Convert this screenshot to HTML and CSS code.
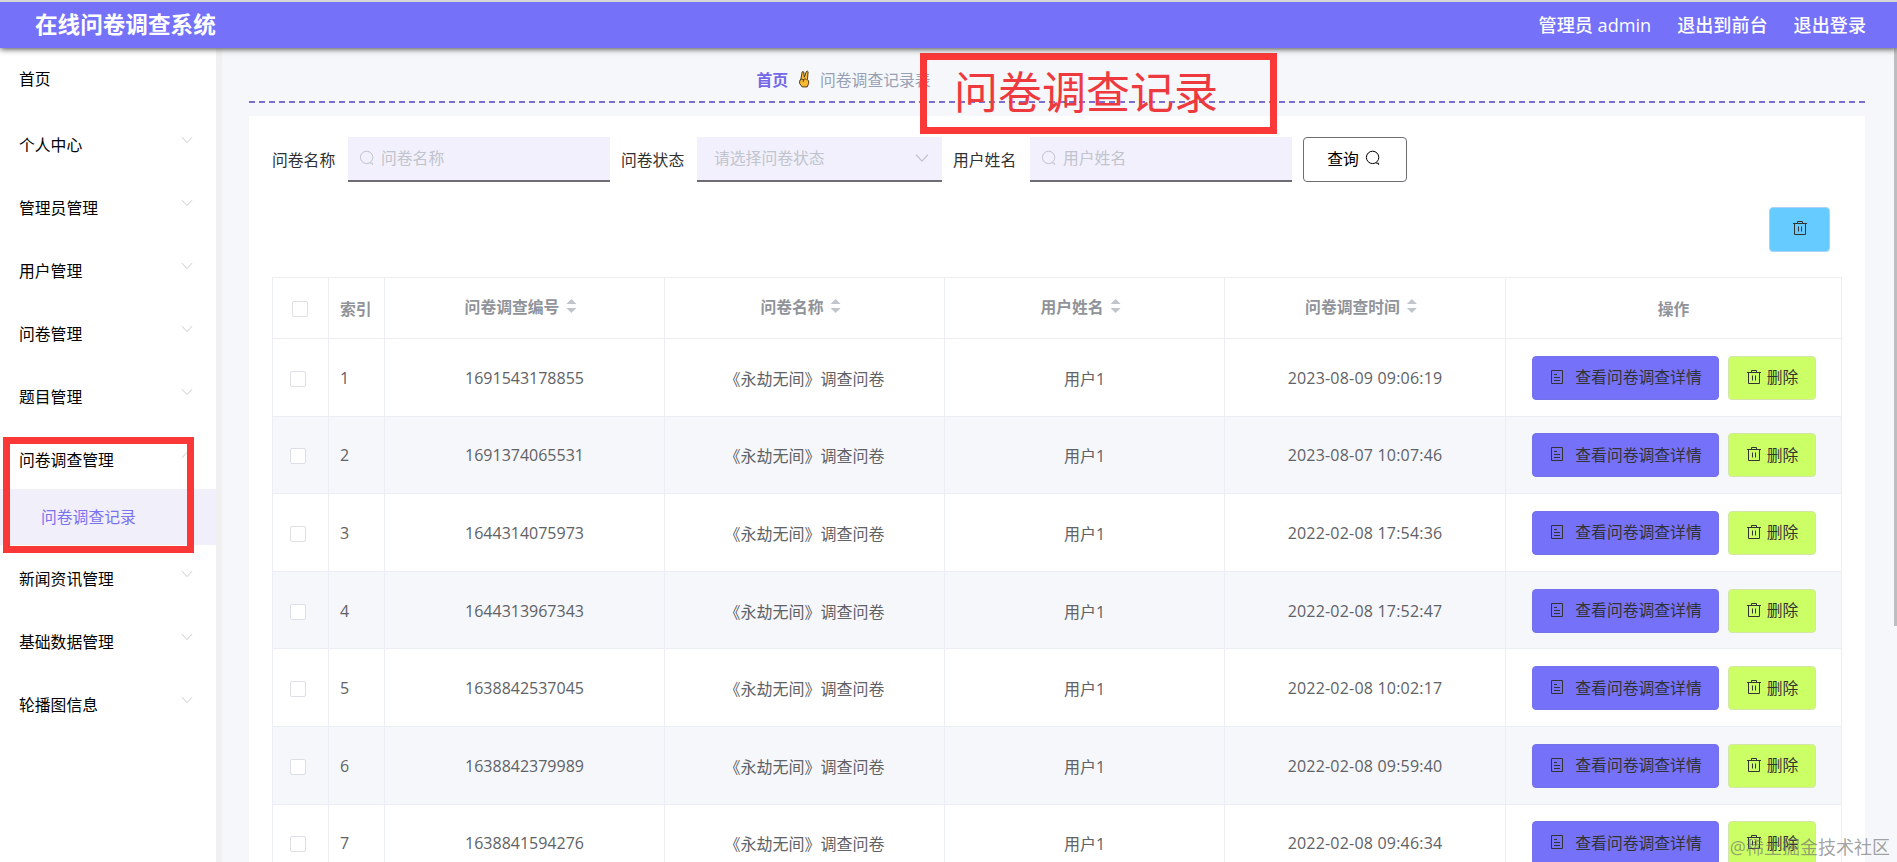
FILE: index.html
```html
<!DOCTYPE html>
<html lang="zh-CN">
<head>
  <meta charset="UTF-8" />
  <meta name="viewport" content="width=device-width, initial-scale=1.0"/>
  <title>在线问卷调查系统</title>
  <link rel="stylesheet" href="styles.css">
</head>
<body>

  <svg class="sprite" xmlns="http://www.w3.org/2000/svg">
    <symbol id="search" viewBox="0 0 16 16">
      <circle cx="7.6" cy="7.4" r="6.2"/>
      <path d="M11.2 13.2H13.6V14.8"/>
    </symbol>
    <symbol id="down" viewBox="0 0 12 12">
      <path d="M1 3.2L6 8.6L11 3.2"/>
    </symbol>
    <symbol id="trash" viewBox="0 0 16 16">
      <path d="M1 3.5H15M5.5 3V1.5H10.5V3M2.5 3.5V14.5H13.5V3.5M6.5 6.5V11.5M9.5 6.5V11.5"/>
    </symbol>
    <symbol id="doc" viewBox="0 0 16 16">
      <path d="M2.5 1.5H13.5V14.5H2.5ZM5 5.5H8M5 8.5H11M5 11.5H11"/>
    </symbol>
  </svg>

  <header class="navbar">
    <h1>在线问卷调查系统</h1>
    <nav>
      <span>管理员 admin</span>
      <span>退出到前台</span>
      <span>退出登录</span>
    </nav>
  </header>

  <div class="container">
    <aside class="sidebar">
      <ul class="menu">
        <li class="home">首页</li>
        <li>个人中心<svg><use href="#down"/></svg></li>
        <li>管理员管理<svg><use href="#down"/></svg></li>
        <li>用户管理<svg><use href="#down"/></svg></li>
        <li>问卷管理<svg><use href="#down"/></svg></li>
        <li>题目管理<svg><use href="#down"/></svg></li>
        <li class="open">问卷调查管理<svg><use href="#down"/></svg></li>
        <li class="sub">问卷调查记录</li>
        <li>新闻资讯管理<svg><use href="#down"/></svg></li>
        <li>基础数据管理<svg><use href="#down"/></svg></li>
        <li>轮播图信息<svg><use href="#down"/></svg></li>
      </ul>
      <div class="mark mark-menu"></div>
    </aside>

    <main class="content">
      <div class="breadcrumb">
        <b>首页</b>
        <svg class="hand" viewBox="0 0 14 20">
          <path d="M3 10L4.4 2.2Q5.3.6 6.2 2.3L6.8 8L9 1.8Q10.2.4 11 2L10.3 10.4Q12.2 12 11.6 15L10 18.8H4.4L1.6 15Q1 11.5 3 10Z"/>
          <path d="M2 11.5Q4 9 6 10.8L5.5 13.2M6 10.5Q8 9 9.4 11"/>
        </svg>
        <span>问卷调查记录表</span>
      </div>

      <div class="card">
        <form class="search">
          <label>问卷名称</label>
          <div class="field"><svg><use href="#search"/></svg>问卷名称</div>
          <label>问卷状态</label>
          <div class="field select">请选择问卷状态<svg><use href="#down"/></svg></div>
          <label class="name">用户姓名</label>
          <div class="field"><svg><use href="#search"/></svg>用户姓名</div>
          <button type="button" class="btn-search">查询<svg><use href="#search"/></svg></button>
        </form>

        <div class="tools">
          <button class="btn-batch"><svg><use href="#trash"/></svg></button>
        </div>

        <table>
          <colgroup>
            <col class="w-check"><col class="w-check"><col class="w-data"><col class="w-data"><col class="w-data"><col class="w-time"><col>
          </colgroup>
          <thead>
            <tr>
              <th class="check"><i class="box"></i></th>
              <th class="index">索引</th>
              <th><div class="sort">问卷调查编号<i></i></div></th>
              <th><div class="sort">问卷名称<i></i></div></th>
              <th><div class="sort">用户姓名<i></i></div></th>
              <th><div class="sort">问卷调查时间<i></i></div></th>
              <th>操作</th>
            </tr>
          </thead>
          <tbody id="rows"></tbody>
        </table>
      </div>

      <div class="mark mark-title">问卷调查记录</div>
    </main>
  </div>

  <div class="scrollbar"></div>
  <div class="watermark">@稀土掘金技术社区</div>

  <script>
    const records = [
      ["1691543178855", "2023-08-09 09:06:19"],
      ["1691374065531", "2023-08-07 10:07:46"],
      ["1644314075973", "2022-02-08 17:54:36"],
      ["1644313967343", "2022-02-08 17:52:47"],
      ["1638842537045", "2022-02-08 10:02:17"],
      ["1638842379989", "2022-02-08 09:59:40"],
      ["1638841594276", "2022-02-08 09:46:34"]
    ];

    document.getElementById("rows").innerHTML = records.map((r, i) => `
      <tr>
        <td class="check"><i class="box"></i></td>
        <td class="index">${i + 1}</td>
        <td>${r[0]}</td>
        <td>《永劫无间》调查问卷</td>
        <td>用户1</td>
        <td class="time">${r[1]}</td>
        <td><div class="actions">
          <button class="btn-detail"><svg><use href="#doc"/></svg>查看问卷调查详情</button>
          <button class="btn-delete"><svg><use href="#trash"/></svg>删除</button>
        </div></td>
      </tr>`).join("");
  </script>

</body>
</html>
```
FILE: styles.css
```css
* {
  box-sizing: border-box;
}

body {
  margin: 0;
  height: 862px;
  overflow: hidden;
  font-family: "Open Sans", "Noto Sans CJK SC", sans-serif;
  font-size: 15.8px;
  color: #303133;
  background-color: #f5f7fa;
}

.sprite {
  display: none;
}

svg {
  fill: none;
  stroke: currentColor;
}

button {
  font-family: inherit;
  font-size: 15.8px;
  color: #333;
  border-radius: 4px;
  display: flex;
  align-items: center;
  justify-content: center;
}

.navbar {
  position: relative;
  z-index: 2;
  display: flex;
  justify-content: space-between;
  align-items: center;
  height: 48px;
  padding: 0 31px 0 35px;
  border-top: 2px solid #d6d6d6;
  background-color: #7571f9;
  box-shadow: 0 1px 6px #444;
  color: #fff;
}

.navbar h1 {
  margin: 0;
  font-size: 22.6px;
  line-height: 46px;
}

.navbar nav {
  display: flex;
  gap: 26px;
  padding-bottom: 3px;
  font-size: 18.1px;
  font-weight: 500;
}

.container {
  display: flex;
  height: 814px;
}

.sidebar {
  position: relative;
  flex: none;
  width: 222px;
  border-right: 6px solid #f0f0f0;
  background-color: #fff;
}

.menu {
  margin: 0;
  padding: 3px 0 0;
  list-style: none;
  color: #000;
}

.menu li {
  display: flex;
  justify-content: space-between;
  height: 56px;
  margin-bottom: 7px;
  padding: 0 23px 0 19px;
  line-height: 56px;
}

.menu .home {
  margin-bottom: 10px;
}

.menu svg {
  width: 12px;
  height: 12px;
  margin-top: 17px;
  color: #ccc;
}

.menu .open {
  margin-bottom: 1px;
}

.menu .open svg {
  transform: rotate(180deg);
}

.menu .sub {
  margin-bottom: 6px;
  padding-left: 41px;
  background-color: #f1effa;
  color: #7b72f0;
}

.mark {
  position: absolute;
  border: 7px solid #fb3838;
}

.mark-menu {
  left: 3px;
  top: 389px;
  width: 191px;
  height: 116px;
}

.mark-title {
  left: 698px;
  top: 5px;
  width: 357px;
  height: 81px;
  padding-left: 27px;
  font-size: 44px;
  line-height: 64px;
  color: #ee3a3e;
}

.content {
  position: relative;
  flex: 1;
  padding: 0 32px 0 27px;
}

.breadcrumb {
  display: flex;
  justify-content: center;
  align-items: center;
  height: 55px;
  margin-bottom: 13px;
  padding: 7px 427px 0 0;
  background: repeating-linear-gradient(90deg, #7a6ed0 0 6px, transparent 6px 10px) 0 100% / 100% 2px no-repeat;
  color: #97a0b4;
}

.breadcrumb b {
  color: #7468e8;
}

.hand {
  width: 13px;
  height: 18px;
  margin: 0 9px 0 10px;
  fill: #fcba30;
  stroke: #3b2a12;
}

.card {
  height: 746px;
  padding: 21px 23px 0;
  background-color: #fff;
}

.search {
  display: flex;
  height: 45px;
}

.search label {
  line-height: 46px;
  width: 76px;
}

.search .name {
  width: 77px;
}

.field {
  display: flex;
  align-items: center;
  width: 262px;
  margin-right: 11px;
  padding: 0 11px 2px;
  border-bottom: 2px solid #706c74;
  background-color: #f2f0fc;
  color: #c0c4cc;
}

.field svg {
  width: 16px;
  height: 16px;
  margin-right: 6px;
}

.select {
  justify-content: space-between;
  width: 245px;
  padding-left: 17px;
}

.select svg {
  width: 14px;
  height: 14px;
  margin-right: 2px;
}

.btn-search {
  width: 104px;
  padding: 0 2px 3px 0;
  border: 1px solid #706c74;
  background-color: #fff;
  color: #000;
}

.btn-search svg {
  width: 16px;
  height: 16px;
  margin-left: 6px;
}

.tools {
  display: flex;
  justify-content: flex-end;
  padding: 25px 12px 25px 0;
}

.btn-batch {
  width: 61px;
  height: 45px;
  padding: 0 0 3px;
  border: 1px solid #a9d2f5;
  background-color: #66ccff;
}

.btn-batch svg,
.btn-delete svg,
.btn-detail svg {
  width: 16px;
  height: 16px;
}

table {
  width: 1570px;
  table-layout: fixed;
  border-collapse: collapse;
  color: #606266;
}

.w-check {
  width: 56px;
}

.w-data {
  width: 280px;
}

.w-time {
  width: 281px;
}

th,
td {
  padding: 0;
  border: 1px solid #ebeef5;
  text-align: center;
}

th {
  height: 61px;
  font-weight: 600;
  color: #909399;
}

td {
  height: 77.6px;
  padding-top: 1px;
  font-size: 16px;
}

.time {
  letter-spacing: 0.2px;
}

tbody tr:nth-child(even) {
  background-color: #f5f7fb;
}

.index {
  padding-left: 11px;
  text-align: left;
}

.box {
  display: block;
  width: 16px;
  height: 16px;
  margin-left: 17px;
  border: 1px solid #dcdfe6;
  border-radius: 2px;
  background-color: #fff;
}

td .box {
  margin-top: 2px;
}

th .box {
  margin-top: 2px;
  margin-left: 19px;
}

.sort {
  display: flex;
  justify-content: center;
  align-items: center;
  padding-bottom: 4px;
}

.sort i {
  width: 10px;
  height: 14px;
  margin: 0 8px 0 7px;
  background-color: #c0c4cc;
  clip-path: polygon(50% 0, 100% 36%, 0 36%, 0 64%, 100% 64%, 50% 100%, 0 64%, 0 36%);
}

.actions {
  display: flex;
  gap: 9px;
  padding-left: 26px;
}

.btn-detail,
.btn-delete {
  height: 44px;
  padding: 0 0 2px;
  border: 1px solid #7571e8;
}

.btn-detail {
  width: 187px;
  background-color: #7571f9;
}

.btn-detail svg {
  margin-right: 10px;
}

.btn-delete {
  width: 88px;
  border-color: #d3e6a8;
  background-color: #ccff66;
}

.btn-delete svg {
  margin-right: 5px;
}

.scrollbar {
  position: absolute;
  z-index: 1;
  top: 48px;
  right: 0;
  width: 3px;
  height: 578px;
  background-color: #bcbebf;
}

.watermark {
  position: absolute;
  right: 7px;
  bottom: 3px;
  font-size: 18px;
  color: rgba(110, 110, 110, 0.65);
}
```
